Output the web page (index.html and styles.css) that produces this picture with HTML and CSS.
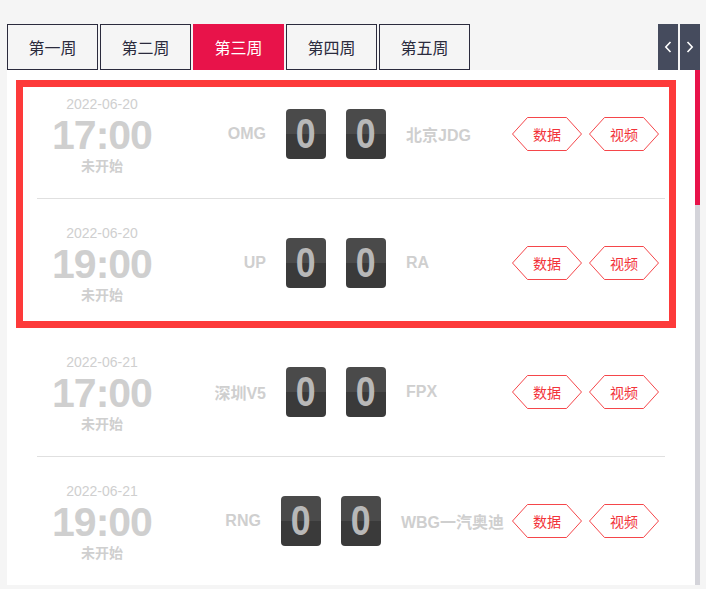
FILE: index.html
```html
<!doctype html>
<html lang="zh-CN">
	<head>
	<meta charset="utf-8">
	<title>赛程</title>
	<link rel="stylesheet" href="styles.css">
	</head>
	<body>

		<div class="page">
			<div class="tabbar">
				<ul class="tabs">
					<li class="tab">第一周</li>
					<li class="tab">第二周</li>
					<li class="tab active">第三周</li>
					<li class="tab">第四周</li>
					<li class="tab">第五周</li>
				</ul>
				<div class="nav">
					<button class="nav-btn" type="button"><svg width="8" height="12" viewBox="0 0 8 12"><path d="M6.5 1 L1.8 6 L6.5 11" fill="none" stroke="#fff" stroke-width="1.6"/></svg></button>
					<button class="nav-btn" type="button"><svg width="8" height="12" viewBox="0 0 8 12"><path d="M1.5 1 L6.2 6 L1.5 11" fill="none" stroke="#fff" stroke-width="1.6"/></svg></button>
				</div>
			</div>

			<div class="panel">
				<div class="list"></div>
				<div class="scrollbar"><div class="thumb"></div></div>
			</div>

			<div class="highlight"></div>
		</div>

	<script>

	var matches = [
		['2022-06-20', '17:00', 'OMG', '北京JDG'],
		['2022-06-20', '19:00', 'UP', 'RA'],
		['2022-06-21', '17:00', '深圳V5', 'FPX'],
		['2022-06-21', '19:00', 'RNG', 'WBG一汽奥迪']
	];

	var hex = '<svg class="hex" width="70" height="34" viewBox="0 0 70 34"><polygon points="15.5,0.5 54.5,0.5 69.5,17 54.5,33.5 15.5,33.5 0.5,17" fill="#fff" stroke="#f5464a"/></svg>';

	function btn(label) {
		return '<a class="hex-btn" href="#">' + hex + '<span>' + label + '</span></a>';
	}

	var html = '';
	matches.forEach(function(m) {
		html += '<div class="match">' +
			'<div class="when"><div class="date">' + m[0] + '</div><div class="time">' + m[1] + '</div><div class="status">未开始</div></div>' +
			'<div class="team team-l">' + m[2] + '</div>' +
			'<div class="score"><span>0</span></div>' +
			'<div class="score"><span>0</span></div>' +
			'<div class="team team-r">' + m[3] + '</div>' +
			'<div class="links">' + btn('数据') + btn('视频') + '</div>' +
			'</div>';
	});
	document.querySelector('.list').innerHTML = html;

	</script>
	</body>
</html>
```

FILE: styles.css
```css
html, body {
	margin: 0;
	background: #f5f5f5;
	font-family: "Liberation Sans", "Noto Sans CJK SC", sans-serif;
}

.page {
	position: relative;
	width: 706px;
	padding: 24px 6px 0 7px;
	box-sizing: border-box;
}

.tabbar {
	display: flex;
	justify-content: space-between;
	height: 46px;
}

.tabs {
	display: flex;
	gap: 2px;
	margin: 0;
	padding: 0;
	list-style: none;
}

.tab {
	width: 91px;
	height: 46px;
	box-sizing: border-box;
	border: 1px solid #2b2b3d;
	line-height: 44px;
	text-align: center;
	font-size: 16px;
	color: #2b2b3d;
	font-family: "Noto Sans CJK SC", sans-serif;
}

.tab.active {
	background: #e8134a;
	border-color: #e8134a;
	color: #fff;
}

.nav {
	display: flex;
	gap: 2px;
}

.nav-btn {
	width: 20px;
	height: 46px;
	padding: 0;
	border: 0;
	background: #454b5d;
	display: flex;
	align-items: center;
	justify-content: center;
}

.panel {
	display: flex;
	height: 515px;
}

.list {
	flex: 1;
	overflow: hidden;
	background: #fff;
}

.scrollbar {
	width: 5px;
	background: #d4d4da;
}

.thumb {
	height: 135px;
	background: #e8134a;
}

.match {
	display: flex;
	align-items: center;
	height: 128px;
	margin: 0 30px;
	padding-right: 6px;
	border-bottom: 1px solid #e0e0e0;
}

.when {
	width: 130px;
	text-align: center;
	color: #cfcfcf;
}

.date {
	font-size: 14px;
	line-height: 18px;
}

.time {
	font-size: 41px;
	font-weight: bold;
	line-height: 44px;
	letter-spacing: -1px;
}

.status {
	font-size: 14px;
	font-weight: bold;
	line-height: 16px;
	font-family: "Noto Sans CJK SC", sans-serif;
}

.team {
	font-size: 16px;
	font-weight: bold;
	color: #cfcfcf;
	white-space: nowrap;
}

.team-l {
	flex: 1;
	text-align: right;
	margin-right: 20px;
}

.team-r {
	min-width: 98px;
	margin-right: 8px;
}

.score {
	display: flex;
	align-items: center;
	justify-content: center;
	width: 40px;
	height: 50px;
	margin-right: 20px;
	border-radius: 4px;
	background: linear-gradient(#4a4a4a 50%, #3a3a3a 50%);
	color: #b8b8b8;
	font-size: 42px;
	font-weight: bold;
	line-height: 50px;
}

.score span {
	transform: scaleX(0.85);
}

.links {
	display: flex;
	gap: 7px;
}

.hex-btn {
	display: grid;
	width: 70px;
	height: 34px;
	text-decoration: none;
}

.hex-btn .hex,
.hex-btn span {
	grid-area: 1 / 1;
}

.hex-btn span {
	align-self: center;
	justify-self: center;
	font-size: 14px;
	color: #f2333a;
	font-family: "Noto Sans CJK SC", sans-serif;
}

/* annotation frame over the first two matches */
.highlight {
	position: absolute;
	left: 16px;
	top: 80px;
	width: 660px;
	height: 248px;
	box-sizing: border-box;
	border: 7px solid #fd3a3a;
	pointer-events: none;
}
```
